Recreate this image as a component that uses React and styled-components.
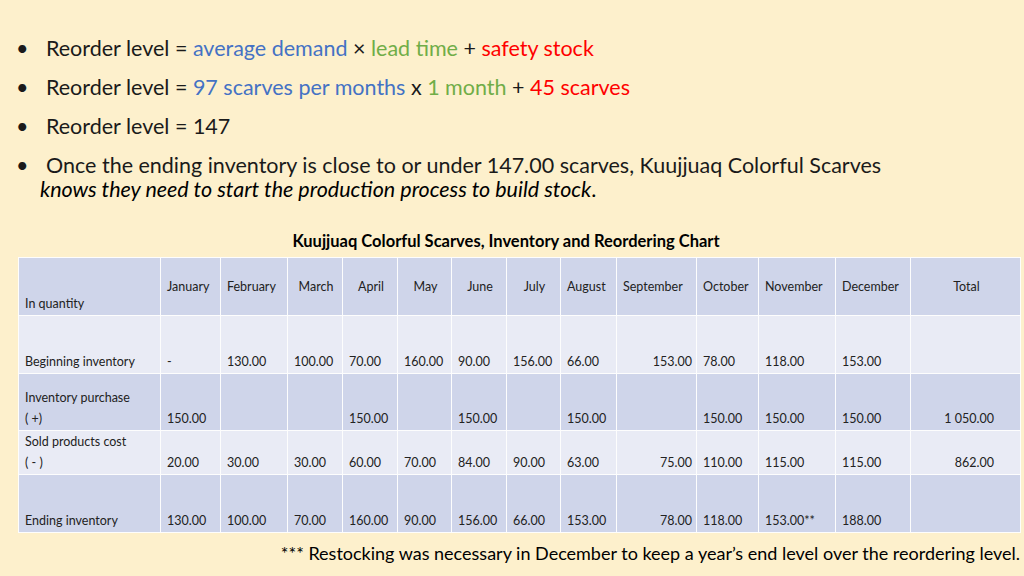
import React from "react";
import styled, { createGlobalStyle } from "styled-components";

const G = createGlobalStyle`
  html,body{margin:0;padding:0;}
  body{background:#fdf0cc;font-family:Lato,"Open Sans",sans-serif;}
`;
const Page = styled.div`width:1024px;height:576px;overflow:hidden;display:flex;flex-direction:column;`;
const List = styled.ul`margin:0;padding:29px 0 0 16px;list-style:none;`;
const Item = styled.li`font-size:21.5px;color:#1a1a1a;line-height:39px;padding-left:30px;position:relative;
  &::before{content:"•";position:absolute;left:0;top:0;}`;
const Cont = styled.div`font-size:21.5px;font-style:italic;line-height:24px;padding-left:40px;margin-top:-8px;`;
const C = styled.span`color:${p=>p.c};`;
const Title = styled.div`text-align:center;font-weight:bold;font-size:16.5px;margin:30px 0 6px 0;padding-right:12px;`;
const Table = styled.table`margin-left:18px;width:1002px;border-collapse:collapse;table-layout:fixed;font-size:12.5px;color:#222;`;
const Tr = styled.tr`height:${p=>p.h}px;background:${p=>p.alt?"#e9ebf5":"#cfd5ea"};`;
const Td = styled.td`border:1.5px solid #fdfdfd;padding:0 4px 1px 6px;vertical-align:${p=>p.va||"bottom"};text-align:${p=>p.al||"left"};white-space:pre-line;line-height:21px;
  ${p=>p.va==="top"?"padding-top:18px;":""}`;
const Foot = styled.div`text-align:right;font-size:18px;padding:9px 4px 0 0;`;

const widths=[142,60,67,55,55,54,55,54,56,80,62,77,75,110];
const months=["January","February","March","April","May","June","July","August","September","October","November","December"];
const topM=new Set(["March","April","May","June","July"]);
const rows=[
 {l:"Beginning inventory",v:["-","130.00","100.00","70.00","160.00","90.00","156.00","66.00","153.00","78.00","118.00","153.00",""],h:58,alt:true},
 {l:"Inventory purchase\n( +)",v:["150.00","","","150.00","","150.00","","150.00","","150.00","150.00","150.00","1 050.00"],h:57},
 {l:"Sold products cost\n( - )",v:["20.00","30.00","30.00","60.00","70.00","84.00","90.00","63.00","75.00","110.00","115.00","115.00","862.00"],h:43,alt:true},
 {l:"Ending inventory",v:["130.00","100.00","70.00","160.00","90.00","156.00","66.00","153.00","78.00","118.00","153.00**","188.00",""],h:58},
];

export default function App(){
  return <Page><G/>
    <List>
      <Item>Reorder level = <C c="#4472c4">average demand</C> × <C c="#70ad47">lead time</C> + <C c="#ff0000">safety stock</C></Item>
      <Item>Reorder level = <C c="#4472c4">97 scarves per months</C> x <C c="#70ad47">1 month</C> + <C c="#ff0000">45 scarves</C></Item>
      <Item>Reorder level = 147</Item>
      <Item>Once the ending inventory is close to or under 147.00 scarves, Kuujjuaq Colorful Scarves</Item>
    </List>
    <Cont>knows they need to start the production process to build stock<span style={{fontStyle:"normal"}}>.</span></Cont>
    <Title>Kuujjuaq Colorful Scarves, Inventory and Reordering Chart</Title>
    <Table>
      <colgroup>{widths.map((w,i)=><col key={i} style={{width:w}}/>)}</colgroup>
      <tbody>
        <Tr h={58}>
          <Td>In quantity</Td>
          {months.map(m=><Td key={m} va={topM.has(m)?"top":"middle"} al={topM.has(m)?"center":"left"}>{m}</Td>)}
          <Td va="top" al="center">Total</Td>
        </Tr>
        {rows.map((r,i)=><Tr key={i} h={r.h} alt={r.alt}>
          <Td>{r.l}</Td>
          {r.v.map((v,j)=><Td key={j} al={j===8||j===12?"right":"left"} style={j===12?{paddingRight:26}:undefined}>{v}</Td>)}
        </Tr>)}
      </tbody>
    </Table>
    <Foot>*** Restocking was necessary in December to keep a year’s end level over the reordering level.</Foot>
  </Page>;
}
